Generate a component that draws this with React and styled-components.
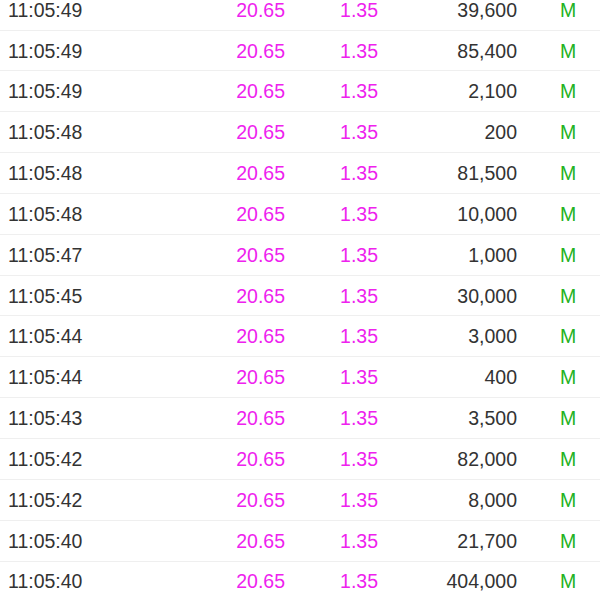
import React from 'react';
import styled, { createGlobalStyle } from 'styled-components';

const Global = createGlobalStyle`
    html, body {
        margin: 0;
        padding: 0;
        background: #fff;
    }
    body {
        font-family: "Liberation Sans", Arial, sans-serif;
    }
`;

const Viewport = styled.div`
    width: 600px;
    height: 600px;
    overflow: hidden;
    background: #fff;
`;

// list is scrolled a little, first row is partly off screen
const List = styled.div`
    margin-top: -10.3px;
`;

const Row = styled.div`
    display: grid;
    grid-template-columns: 192px 85px 93px 139px 1fr;
    align-items: center;
    box-sizing: border-box;
    height: 40.85px;
    padding-left: 8px;
    padding-top: 1.6px;
    border-bottom: 1px solid #efefef;
    font-size: 19.5px;
    line-height: 1;
`;

const Cell = styled.div`
    color: ${props => props.color || '#333'};
    text-align: ${props => props.align || 'left'};
    padding-left: ${props => props.pad || 0}px;
    white-space: nowrap;
`;

const trades = [
    ['11:05:49', '39,600'],
    ['11:05:49', '85,400'],
    ['11:05:49', '2,100'],
    ['11:05:48', '200'],
    ['11:05:48', '81,500'],
    ['11:05:48', '10,000'],
    ['11:05:47', '1,000'],
    ['11:05:45', '30,000'],
    ['11:05:44', '3,000'],
    ['11:05:44', '400'],
    ['11:05:43', '3,500'],
    ['11:05:42', '82,000'],
    ['11:05:42', '8,000'],
    ['11:05:40', '21,700'],
    ['11:05:40', '404,000'],
];

export default function App() {
    return (
        <Viewport>
            <Global />
            <List>
                {trades.map(([time, vol], i) => (
                    <Row key={i}>
                        <Cell>{time}</Cell>
                        <Cell align="right" color="#ee22ee">20.65</Cell>
                        <Cell align="right" color="#ee22ee">1.35</Cell>
                        <Cell align="right">{vol}</Cell>
                        <Cell pad={43} color="#22b222">M</Cell>
                    </Row>
                ))}
            </List>
        </Viewport>
    );
}
